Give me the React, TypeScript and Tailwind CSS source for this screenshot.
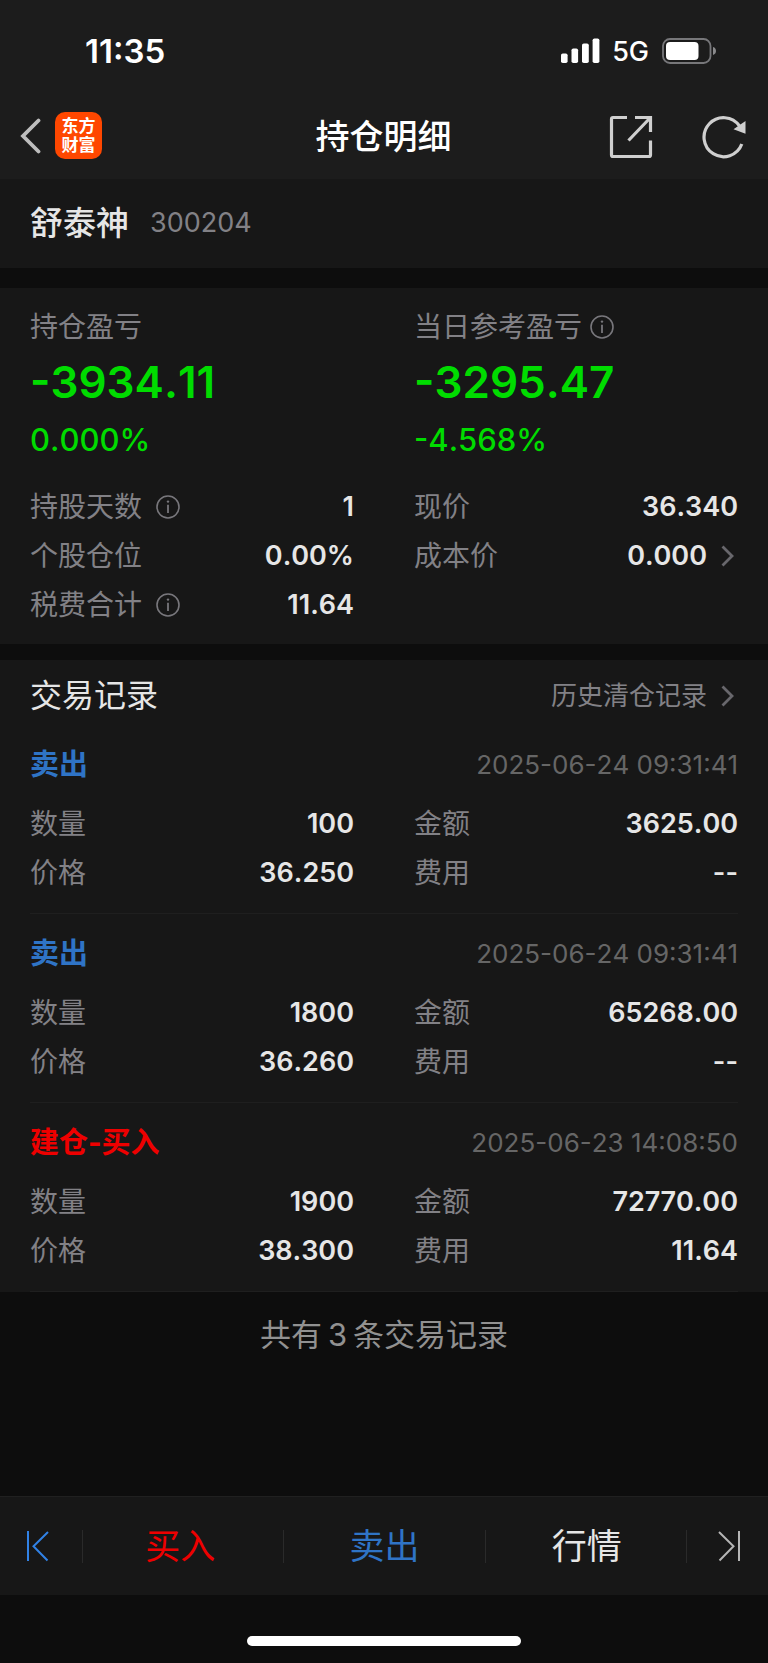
import React from "react";

const SANS = "font-['Inter','Noto_Sans_CJK_SC',sans-serif] [font-kerning:none]";

type Trade = {
  side: "sell" | "buy";
  title: string;
  time: string;
  quantity: string;
  price: string;
  amount: string;
  fee: string;
};

const trades: Trade[] = [
  { side: "sell", title: "卖出", time: "2025-06-24 09:31:41", quantity: "100", price: "36.250", amount: "3625.00", fee: "--" },
  { side: "sell", title: "卖出", time: "2025-06-24 09:31:41", quantity: "1800", price: "36.260", amount: "65268.00", fee: "--" },
  { side: "buy", title: "建仓-买入", time: "2025-06-23 14:08:50", quantity: "1900", price: "38.300", amount: "72770.00", fee: "11.64" },
];

function InfoIcon() {
  return (
    <svg width="24" height="24" viewBox="0 0 24 24" fill="none" stroke="#78777c" aria-hidden="true">
      <circle cx="12" cy="12" r="11" strokeWidth="1.6" />
      <path d="M12 9.8v8.2" strokeWidth="1.8" />
      <circle cx="12" cy="6.6" r="1.2" fill="#78777c" stroke="none" />
    </svg>
  );
}

function ChevronRight() {
  return (
    <svg width="17" height="22" viewBox="0 0 17 22" fill="none" stroke="#68676c" strokeWidth="2.8" aria-hidden="true">
      <path d="M1.500 1.500 11 11l-9.500 9.500" />
    </svg>
  );
}

function Field({ label, value, info = false, chevron = false }: { label: string; value: string; info?: boolean; chevron?: boolean }) {
  return (
    <div className="flex h-[49px] items-center justify-between leading-[42px]">
      <dt className="flex items-center gap-3.5 text-[28px] text-[#828186]">
        {label}
        {info && (
          <button type="button" aria-label={`${label}说明`}>
            <InfoIcon />
          </button>
        )}
      </dt>
      <dd className="flex items-center gap-3.5 text-[27px] font-semibold text-[#e6e6e6]">
        {value}
        {chevron && <ChevronRight />}
      </dd>
    </div>
  );
}

function StatusBar() {
  return (
    <div className="flex h-[94px] items-center justify-between pt-2 pr-[51px] pl-[85px] text-white">
      <span className="pt-0.5 text-[33px] font-semibold">11:35</span>
      <div className="flex items-center gap-3">
        <svg width="40" height="26" viewBox="0 0 40 26" fill="#fff" aria-hidden="true">
          <rect x="1" y="15.500" width="6.600" height="9.500" rx="1.800" />
          <rect x="11.500" y="10.500" width="6.600" height="14.500" rx="1.800" />
          <rect x="22" y="5.500" width="6.800" height="19.500" rx="1.800" />
          <rect x="32.600" y="0.500" width="6.800" height="24.500" rx="1.800" />
        </svg>
        <span className="pt-0.5 text-[27px] font-medium">5G</span>
        <svg width="56" height="28" viewBox="0 0 56 28" fill="none" aria-hidden="true">
          <rect x="2" y="2" width="47.500" height="24" rx="7" stroke="#77777a" strokeWidth="1.800" />
          <rect x="5" y="5" width="32.500" height="18" rx="4" fill="#fff" />
          <path d="M52 10c2 .6 3 2.200 3 4s-1 3.400-3 4z" fill="#8a8a8c" />
        </svg>
      </div>
    </div>
  );
}

function NavBar() {
  return (
    <div className="grid h-[85px] grid-cols-[1fr_auto_1fr] items-center pr-[21px] pl-5">
      <div className="flex items-center gap-3.5 pb-0.5">
        <button type="button" aria-label="返回">
          <svg width="21" height="36" viewBox="0 0 21 36" fill="none" stroke="#bdbdbd" strokeWidth="3.800" strokeLinecap="round" aria-hidden="true">
            <path d="M18.500 2.500 3 18l15.500 15.500" />
          </svg>
        </button>
        <a
          href="#home"
          className="flex size-[47px] flex-col items-center justify-center rounded-[10px] bg-[#ff4700] text-[17px] leading-[19px] font-bold text-white"
        >
          <span>东方</span>
          <span>财富</span>
        </a>
      </div>
      <h1 className="text-[34px] font-medium text-white">持仓明细</h1>
      <div className="flex items-center justify-end gap-[49px]">
        <button type="button" aria-label="分享">
          <svg width="44" height="44" viewBox="0 0 44 44" fill="none" stroke="#cfcfcf" strokeWidth="3.200" aria-hidden="true">
            <path d="M18 2.500H4a1.500 1.500 0 0 0-1.500 1.500v36A1.500 1.500 0 0 0 4 41.500h36a1.500 1.500 0 0 0 1.500-1.500V25.500" />
            <path d="M26 2.500h15.500V17M41.500 2.500 19.500 25.500" />
          </svg>
        </button>
        <button type="button" aria-label="刷新">
          <svg width="45" height="44" viewBox="0 0 45 44" fill="none" aria-hidden="true">
            <path d="M39.800 29A19.500 19.500 0 1 1 37.500 11" stroke="#cfcfcf" strokeWidth="3.200" />
            <path d="M43.500 6v12.800L31.500 14.200z" fill="#cfcfcf" />
          </svg>
        </button>
      </div>
    </div>
  );
}

function Summary({ label, value, percent, info = false }: { label: string; value: string; percent: string; info?: boolean }) {
  return (
    <div>
      <div className="flex h-10 items-center gap-2 text-[28px] leading-[42px] text-[#828186]">
        {label}
        {info && (
          <button type="button" aria-label={`${label}说明`}>
            <InfoIcon />
          </button>
        )}
      </div>
      <div className="flex h-[70px] items-center text-[44px] font-semibold text-[#00dc00]">{value}</div>
      <div className="flex h-[46px] items-center text-[31px] font-medium text-[#00dc00]">{percent}</div>
    </div>
  );
}

function TradeRecord({ trade }: { trade: Trade }) {
  const color = trade.side === "sell" ? "text-[#2f74c6]" : "text-[#ee0000]";
  return (
    <li className="mx-[30px] border-b border-[#1f1f1f] pt-[19px] pb-4">
      <div className="mb-[15px] flex h-10 items-center justify-between">
        <h3 className={`pt-0.5 text-[29px] font-bold ${color}`}>{trade.title}</h3>
        <time className="text-[26px] text-[#666666]">{trade.time}</time>
      </div>
      <dl className="grid grid-cols-2 gap-x-[60px]">
        <Field label="数量" value={trade.quantity} />
        <Field label="金额" value={trade.amount} />
        <Field label="价格" value={trade.price} />
        <Field label="费用" value={trade.fee} />
      </dl>
    </li>
  );
}

function Divider() {
  return <span className="h-[33px] bg-[#2a2a2a]" />;
}

function BottomBar() {
  return (
    <nav className="grid h-[99px] grid-cols-[82px_1px_1fr_1px_1fr_1px_1fr_1px_81px] items-center border-t border-[#202020] bg-[#171717] text-[35px]">
      <button type="button" aria-label="上一只" className="flex justify-center pr-1.5">
        <svg width="24" height="32" viewBox="0 0 24 32" fill="none" stroke="#3182e6" strokeWidth="2" aria-hidden="true">
          <path d="M2 1v30M22 2 7.500 16.200 21.500 30.500" />
        </svg>
      </button>
      <Divider />
      <button type="button" className="pr-1.5 text-[#ee0000]">买入</button>
      <Divider />
      <button type="button" className="text-[#2f74c6]">卖出</button>
      <Divider />
      <button type="button" className="pl-0.5 text-[#e6e6e6]">行情</button>
      <Divider />
      <button type="button" aria-label="下一只" className="flex justify-center pl-1">
        <svg width="24" height="32" viewBox="0 0 24 32" fill="none" stroke="#b5b5b5" strokeWidth="2" aria-hidden="true">
          <path d="M22 1v30M2 2l14.500 14.200L2.500 30.500" />
        </svg>
      </button>
    </nav>
  );
}

export default function App() {
  return (
    <div className={`flex min-h-screen flex-col bg-[#0d0d0d] ${SANS}`}>
      <header className="bg-[#1c1c1c]">
        <StatusBar />
        <NavBar />
      </header>

      <main className="flex-1">
        <section className="flex h-[89px] items-center gap-[21px] bg-[#171717] px-[30px]">
          <h2 className="text-[33px] font-medium text-[#e6e6e6]">舒泰神</h2>
          <span className="text-[27px] text-[#828186]">300204</span>
        </section>

        <section className="mt-5 bg-[#171717] px-[30px] pt-[19px] pb-[15px]">
          <div className="mb-[19px] grid grid-cols-2 gap-x-[60px]">
            <Summary label="持仓盈亏" value="-3934.11" percent="0.000%" />
            <Summary label="当日参考盈亏" value="-3295.47" percent="-4.568%" info />
          </div>
          <dl className="grid grid-cols-2 gap-x-[60px]">
            <Field label="持股天数" value="1" info />
            <Field label="现价" value="36.340" />
            <Field label="个股仓位" value="0.00%" />
            <Field label="成本价" value="0.000" chevron />
            <Field label="税费合计" value="11.64" info />
          </dl>
        </section>

        <section className="mt-4 bg-[#171717]">
          <div className="flex h-[65px] items-center justify-between px-[30px] pt-1.5">
            <h2 className="text-[32px] text-[#e6e6e6]">交易记录</h2>
            <a href="#history" className="flex items-center gap-3.5 text-[26px] text-[#828186]">
              历史清仓记录
              <ChevronRight />
            </a>
          </div>
          <ul>
            {trades.map((trade, i) => (
              <TradeRecord key={i} trade={trade} />
            ))}
          </ul>
        </section>

        <p className="flex h-[86px] items-center justify-center text-[31px] text-[#919191]">
          <span>共有</span>
          <span className="px-1.5">3</span>
          <span>条交易记录</span>
        </p>
      </main>

      <BottomBar />
      <div className="flex h-[68px] items-end justify-center pb-[17px]">
        <div className="h-2.5 w-[274px] rounded-full bg-white" />
      </div>
    </div>
  );
}
